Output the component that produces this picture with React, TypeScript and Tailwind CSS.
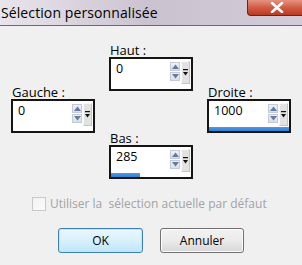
import React from "react";

type FieldProps = {
  label: string;
  value: string;
  bar?: string;
};

function Arrow({ up }: { up?: boolean }) {
  return (
    <div className="w-[10px] h-[9px] bg-linear-to-b from-[#eef1f6] to-[#d9dfe8] border border-[#c3cbd8] flex items-center justify-center">
      <svg width="7" height="5" viewBox="0 0 7 5">
        {up ? (
          <polygon points="0,5 7,5 3.5,0.5" fill="#6579a3" />
        ) : (
          <polygon points="0,0 7,0 3.5,4.5" fill="#6579a3" />
        )}
      </svg>
    </div>
  );
}

function SpinField({ label, value, bar }: FieldProps) {
  return (
    <div className="flex flex-col">
      <div className="h-[15px] text-[13px] leading-[15px] pl-px text-black">{label}</div>
      <div className="mt-[-1px] w-[84px] h-[34px] border-2 border-[#151515] bg-white flex flex-col">
        <div className="flex flex-1">
          <div className="flex-1 pl-[5px] pt-[2px] text-[12.5px] leading-[15px] text-black">{value}</div>
          <div className="flex flex-col gap-px pt-[3px]">
            <Arrow up />
            <Arrow />
          </div>
          <div className="ml-px mr-[1px] mt-[2px] w-[9px] h-[23px] bg-[#e2e2e2] border-l border-t border-l-[#f8f8f8] border-t-[#f8f8f8] border-r border-b border-r-[#c4c4c4] border-b-[#c4c4c4] flex items-center justify-center">
            <svg width="7" height="7" viewBox="0 0 7 7">
              <rect x="1" y="0" width="5" height="1.2" fill="#111" />
              <polygon points="1,3 6,3 3.5,6.5" fill="#111" />
            </svg>
          </div>
        </div>
        <div className="h-[4px] flex">
          {bar ? <div className={`h-full bg-linear-to-b from-[#4e9ae4] to-[#2f7fd3] ${bar}`} /> : null}
        </div>
      </div>
    </div>
  );
}

export default function App() {
  return (
    <div
      className="w-[302px] h-[265px] overflow-hidden bg-[#f0f0f0] flex flex-col"
      style={{ fontFamily: '"Open Sans", "Noto Sans", sans-serif' }}
    >
      {/* barre de titre */}
      <div className="h-[26px] flex items-start border-b border-[#6e6774] bg-linear-to-r from-[#e9e5ec] via-[#cbc2d0] to-[#d4cbd8]">
        <div className="pl-px pt-[3px] text-[14px] leading-[19px] tracking-[0.1px] text-black">Sélection personnalisée</div>
        <div className="ml-auto w-[55px] h-[16px] rounded-bl-[4px] border-l border-b border-[#6b2417] bg-linear-to-b from-[#e6937f] via-[#d05c44] to-[#b93a24] flex items-center justify-center pl-[3px]">
          <svg width="14" height="11" viewBox="0 0 14 11">
            <path d="M2 1 L12 10 M12 1 L2 10" stroke="white" strokeWidth="2.6" strokeLinecap="round" />
          </svg>
        </div>
      </div>

      {/* champs */}
      <div className="flex gap-[14px] pl-[11px] pt-[17px]">
        <div className="pt-[42px]">
          <SpinField label="Gauche :" value="0" />
        </div>
        <div className="flex flex-col gap-[40px]">
          <SpinField label="Haut :" value="0" />
          <SpinField label="Bas :" value="285" bar="w-[29px]" />
        </div>
        <div className="pt-[42px]">
          <SpinField label="Droite :" value="1000" bar="w-full" />
        </div>
      </div>

      {/* case à cocher */}
      <div className="flex items-center pl-[32px] mt-[17px]">
        <div className="w-[14px] h-[14px] border border-[#c9c9c9] bg-linear-to-br from-[#f2f2f2] to-[#fbfbfb]" />
        <div className="ml-[4px] text-[12px] leading-[15px] text-[#a3a3a3] whitespace-pre">
          Utiliser la  sélection actuelle par défaut
        </div>
      </div>

      {/* boutons */}
      <div className="flex gap-[17px] pl-[58px] mt-[17px]">
        <button className="w-[85px] h-[25px] rounded-[3px] border border-[#3c7fb1] bg-linear-to-b from-[#eaf6fd] via-[#d9f0fc] to-[#bee6fd] text-[12px] text-black shadow-[inset_0_0_0_1px_#c6e6f8]">
          OK
        </button>
        <button className="w-[84px] h-[25px] rounded-[3px] border border-[#707070] bg-linear-to-b from-[#f2f2f2] via-[#ebebeb] to-[#d6d6d6] text-[12px] text-black shadow-[inset_0_0_0_1px_#fcfcfc]">
          Annuler
        </button>
      </div>
    </div>
  );
}
